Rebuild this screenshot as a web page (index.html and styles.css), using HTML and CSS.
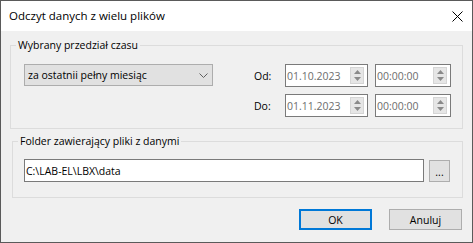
FILE: index.html
```html
<!DOCTYPE html>
<html lang="pl">
<head>
<meta charset="utf-8">
<title>Odczyt danych z wielu plików</title>
<link rel="stylesheet" href="styles.css">
</head>
<body>
<div class="window">
  <div class="titlebar">
    <span class="title">Odczyt danych z wielu plików</span>
    <svg class="close" width="11" height="11" viewBox="0 0 11 11"><path d="M0.5 0.5 L10.5 10.5 M10.5 0.5 L0.5 10.5" stroke="#000" stroke-width="1" fill="none"/></svg>
  </div>
  <div class="content">
    <div class="group group-time">
      <span class="legend">Wybrany przedział czasu</span>
      <div class="combo">
        <span>za ostatnii pełny miesiąc</span>
        <svg class="chev" width="9" height="5" viewBox="0 0 9 5"><path d="M0.5 0.5 L4.5 4.5 L8.5 0.5" stroke="#606060" stroke-width="1" fill="none"/></svg>
      </div>
      <div class="range">
        <span class="lbl">Od:</span>
        <div class="field"><span>01.10.2023</span><span class="spin"><span class="half"><svg width="7" height="4" viewBox="0 0 7 4"><path d="M0 4 L3.5 0 L7 4Z" fill="#8a8a8a"/></svg></span><span class="half"><svg width="7" height="4" viewBox="0 0 7 4"><path d="M0 0 L3.5 4 L7 0Z" fill="#8a8a8a"/></svg></span></span></div>
        <div class="field"><span>00:00:00</span><span class="spin"><span class="half"><svg width="7" height="4" viewBox="0 0 7 4"><path d="M0 4 L3.5 0 L7 4Z" fill="#8a8a8a"/></svg></span><span class="half"><svg width="7" height="4" viewBox="0 0 7 4"><path d="M0 0 L3.5 4 L7 0Z" fill="#8a8a8a"/></svg></span></span></div>
        <span class="lbl">Do:</span>
        <div class="field"><span>01.11.2023</span><span class="spin"><span class="half"><svg width="7" height="4" viewBox="0 0 7 4"><path d="M0 4 L3.5 0 L7 4Z" fill="#8a8a8a"/></svg></span><span class="half"><svg width="7" height="4" viewBox="0 0 7 4"><path d="M0 0 L3.5 4 L7 0Z" fill="#8a8a8a"/></svg></span></span></div>
        <div class="field"><span>00:00:00</span><span class="spin"><span class="half"><svg width="7" height="4" viewBox="0 0 7 4"><path d="M0 4 L3.5 0 L7 4Z" fill="#8a8a8a"/></svg></span><span class="half"><svg width="7" height="4" viewBox="0 0 7 4"><path d="M0 0 L3.5 4 L7 0Z" fill="#8a8a8a"/></svg></span></span></div>
      </div>
    </div>
    <div class="group group-folder">
      <span class="legend">Folder zawierający pliki z danymi</span>
      <div class="path">C:\LAB-EL\LBX\data</div>
      <div class="browse">...</div>
    </div>
    <div class="actions">
      <div class="btn btn-default">OK</div>
      <div class="btn">Anuluj</div>
    </div>
  </div>
</div>
</body>
</html>
```

FILE: styles.css
```css
html, body {
  margin: 0;
  padding: 0;
  background: #ffffff;
}

.window {
  width: 473px;
  height: 243px;
  box-sizing: border-box;
  border: 1px solid #5a5a5a;
  background: #f0f0f0;
  font-family: "Open Sans", "Noto Sans", sans-serif;
  font-size: 10.5px;
  color: #000;
  display: flex;
  flex-direction: column;
}

.titlebar {
  height: 30px;
  background: #ffffff;
  display: flex;
  align-items: center;
  justify-content: space-between;
  padding: 0 9px 0 8px;
  flex: none;
}

.title {
  font-size: 11.5px;
  line-height: 16px;
}

.close {
  display: block;
}

.content {
  padding: 14px 9px 0 9px;
  display: flex;
  flex-direction: column;
}

.group {
  position: relative;
  border: 1px solid #dcdcdc;
  box-sizing: border-box;
}

.legend {
  position: absolute;
  top: -8px;
  left: 5px;
  padding: 0 2px;
  line-height: 14px;
  background: #f0f0f0;
  white-space: nowrap;
}

.group-time {
  height: 84px;
  display: flex;
  align-items: flex-start;
  padding: 18px 11px 0 13px;
}

.combo {
  width: 189px;
  height: 22px;
  box-sizing: border-box;
  border: 1px solid #adadad;
  background: #e1e1e1;
  display: flex;
  align-items: center;
  justify-content: space-between;
  padding: 0 4px 0 3px;
}

.chev {
  display: block;
}

.range {
  margin-left: auto;
  display: grid;
  grid-template-columns: 24px 83px 76px;
  column-gap: 7px;
  row-gap: 7px;
  align-items: center;
}

.lbl {
  line-height: 14px;
}

.field {
  height: 23px;
  box-sizing: border-box;
  border: 1px solid #7a7a7a;
  background: #ffffff;
  color: #6d6d6d;
  display: flex;
  align-items: center;
  justify-content: space-between;
  padding: 0 3px 0 1px;
}

.spin {
  width: 14px;
  height: 17px;
  box-sizing: border-box;
  display: flex;
  flex-direction: column;
  background: #e6e6e6;
  border: 1px solid #d5d5d5;
}

.half {
  flex: 1;
  display: flex;
  align-items: center;
  justify-content: center;
}

.half svg {
  display: block;
}

.group-folder {
  height: 57px;
  margin: 12px 0 0 2px;
  display: flex;
  align-items: flex-start;
  gap: 5px;
  padding: 17px 12px 0 11px;
}

.path {
  flex: 1;
  height: 23px;
  box-sizing: border-box;
  border: 1px solid #7a7a7a;
  background: #ffffff;
  display: flex;
  align-items: center;
  padding-left: 1px;
}

.browse {
  width: 21px;
  height: 22px;
  margin-top: 1px;
  box-sizing: border-box;
  border: 1px solid #adadad;
  background: #e1e1e1;
  display: flex;
  align-items: center;
  justify-content: center;
  line-height: 12px;
  padding-top: 2px;
}

.actions {
  display: flex;
  justify-content: flex-end;
  gap: 17px;
  margin: 11px 1px 0 0;
}

.btn {
  width: 73px;
  height: 21px;
  box-sizing: border-box;
  border: 1px solid #adadad;
  background: #e1e1e1;
  display: flex;
  align-items: center;
  justify-content: center;
}

.btn-default {
  border: 2px solid #0078d7;
}
```
